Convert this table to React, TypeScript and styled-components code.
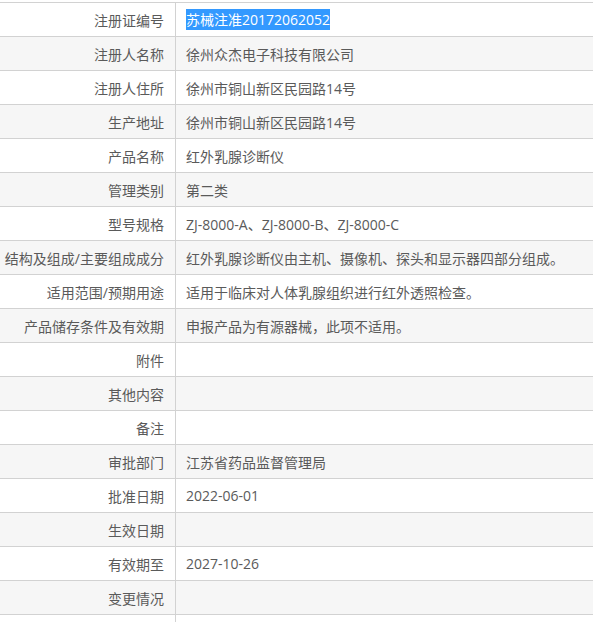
import React from "react";
import styled, { createGlobalStyle } from "styled-components";

const Global = createGlobalStyle`
  html, body { margin: 0; padding: 0; background: #fff; }
  body { font-family: "Open Sans", "Noto Sans CJK SC", sans-serif; }
`;

const Table = styled.div`
  margin-top: 2px;
  width: 593px;
  display: flex;
  flex-direction: column;
  border-top: 1px solid #d2d2d2;
`;

const Row = styled.div<{ $alt: boolean }>`
  display: grid;
  grid-template-columns: 176px 1fr;
  height: 33px;
  border-bottom: 1px solid #d2d2d2;
  background: ${(p) => (p.$alt ? "#f6f6f6" : "#ffffff")};
`;

const Label = styled.div`
  display: flex;
  align-items: center;
  justify-content: flex-end;
  padding-right: 11px;
  font-size: 14px;
  color: #5a5a5a;
  white-space: nowrap;
  border-right: 1px solid #d2d2d2;
`;

const Value = styled.div`
  display: flex;
  align-items: center;
  padding-left: 10px;
  font-size: 14px;
  color: #5a5a5a;
  white-space: nowrap;
`;

const Selected = styled.span`
  background: #3399ff;
  color: #fff;
  line-height: 21px;
`;

const rows: [string, string][] = [
  ["注册证编号", "苏械注准20172062052"],
  ["注册人名称", "徐州众杰电子科技有限公司"],
  ["注册人住所", "徐州市铜山新区民园路14号"],
  ["生产地址", "徐州市铜山新区民园路14号"],
  ["产品名称", "红外乳腺诊断仪"],
  ["管理类别", "第二类"],
  ["型号规格", "ZJ-8000-A、ZJ-8000-B、ZJ-8000-C"],
  ["结构及组成/主要组成成分", "红外乳腺诊断仪由主机、摄像机、探头和显示器四部分组成。"],
  ["适用范围/预期用途", "适用于临床对人体乳腺组织进行红外透照检查。"],
  ["产品储存条件及有效期", "申报产品为有源器械，此项不适用。"],
  ["附件", ""],
  ["其他内容", ""],
  ["备注", ""],
  ["审批部门", "江苏省药品监督管理局"],
  ["批准日期", "2022-06-01"],
  ["生效日期", ""],
  ["有效期至", "2027-10-26"],
  ["变更情况", ""],
  ["", ""],
];

export default function App() {
  return (
    <>
      <Global />
      <Table>
        {rows.map(([label, value], i) => (
          <Row key={i} $alt={i % 2 === 1}>
            <Label>{label}</Label>
            <Value>{i === 0 ? <Selected>{value}</Selected> : value}</Value>
          </Row>
        ))}
      </Table>
    </>
  );
}
